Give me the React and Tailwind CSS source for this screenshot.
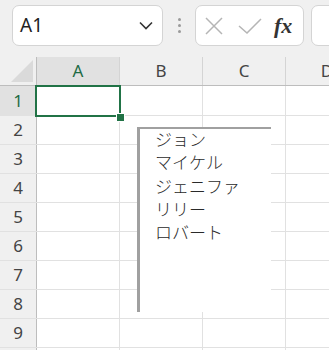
import React from 'react';

const cols = ['A', 'B', 'C', 'D'];
const rows = [1, 2, 3, 4, 5, 6, 7, 8, 9, 10];
const names = ['ジョン', 'マイケル', 'ジェニファ', 'リリー', 'ロバート'];

const ui = { fontFamily: '"Noto Sans", "Liberation Sans", sans-serif' };
const jp = { fontFamily: '"Noto Sans CJK JP", "Noto Sans", sans-serif' };

const App = () => {
  return (
    <div className="w-[329px] h-[350px] overflow-hidden bg-[#f0f0f0] relative" style={ui}>
      {/* formula bar */}
      <div className="h-[57px] flex items-start pt-[5px] pl-[12px]">
        <div className="w-[151px] h-[41px] bg-white border border-[#d4d4d4] rounded-[7px] flex items-center justify-between pl-[7px] pr-[9px] shrink-0">
          <span className="text-[19px] text-[#1f1f1f] leading-none">A1</span>
          <svg width="14" height="9" viewBox="0 0 14 9" fill="none" stroke="#333" strokeWidth="1.6">
            <path d="M1 1.5 L7 7.5 L13 1.5" />
          </svg>
        </div>
        <div className="w-[32px] h-[41px] flex flex-col items-center justify-center gap-[3px] shrink-0">
          <span className="w-[3px] h-[3px] bg-[#9a9a9a] rounded-full" />
          <span className="w-[3px] h-[3px] bg-[#9a9a9a] rounded-full" />
          <span className="w-[3px] h-[3px] bg-[#9a9a9a] rounded-full" />
        </div>
        <div className="w-[109px] h-[41px] bg-white border border-[#d4d4d4] rounded-[7px] flex items-center pl-[8px] gap-[14px] shrink-0">
          <svg width="20" height="18" viewBox="0 0 20 18" fill="none" stroke="#b5b5b5" strokeWidth="1.5">
            <path d="M2 1 L18 17 M18 1 L2 17" />
          </svg>
          <svg width="24" height="16" viewBox="0 0 24 16" fill="none" stroke="#b5b5b5" strokeWidth="1.5">
            <path d="M1 8 L9 15 L23 1" />
          </svg>
          <span className="text-[22px] leading-none text-[#333] italic font-bold -ml-[2px]" style={{ fontFamily: '"Liberation Serif", serif' }}>fx</span>
        </div>
        <div className="ml-[7px] w-[40px] h-[41px] bg-white border border-[#d4d4d4] rounded-[7px] shrink-0" />
      </div>

      {/* grid */}
      <div className="bg-white">
        <div className="flex h-[29px] bg-[#f0f0f0] border-b border-[#bdbdbd]">
          <div className="w-[37px] shrink-0 border-r border-[#bdbdbd] relative overflow-hidden">
            <svg className="absolute right-[3px] bottom-[3px]" width="22" height="22" viewBox="0 0 22 22">
              <path d="M22 0 L22 22 L0 22 Z" fill="#dadada" />
            </svg>
          </div>
          {cols.map((c, i) => (
            <div
              key={c}
              className={`w-[83px] shrink-0 border-r border-[#d4d4d4] flex items-center justify-center text-[17px] ${i === 0 ? 'bg-[#e1e1e1] text-[#1e6b45]' : 'text-[#444]'}`}
            >
              {c}
            </div>
          ))}
        </div>
        {rows.map((r, ri) => (
          <div key={r} className={`flex ${ri === 0 ? 'h-[30px]' : 'h-[29px]'} border-b border-[#e1e1e1]`}>
            <div
              className={`w-[37px] shrink-0 border-r border-[#bdbdbd] flex items-center justify-center text-[17px] ${ri === 0 ? 'bg-[#e1e1e1] text-[#1e6b45]' : 'bg-[#f0f0f0] text-[#444]'}`}
            >
              {r < 10 ? r : ''}
            </div>
            {cols.map((c) => (
              <div key={c} className="w-[83px] shrink-0 border-r border-[#e1e1e1]" />
            ))}
          </div>
        ))}
      </div>

      {/* selection A1 */}
      <div className="absolute left-[35px] top-[85px] w-[86px] h-[32px] border-2 border-[#217346]" />
      <div className="absolute left-[116px] top-[113px] w-[7px] h-[7px] bg-[#217346] border border-white box-content" />

      {/* list box */}
      <div className="absolute left-[137px] top-[127px] w-[134px] h-[185px] bg-white border-l-[3px] border-t-[2px] border-[#a0a0a0] pl-[15px]" style={jp}>
        <div className="-mt-[2px]">
          {names.map((n) => (
            <div key={n} className="text-[17px] leading-[23.3px] text-[#2a2a2a] font-light">
              {n}
            </div>
          ))}
        </div>
      </div>
    </div>
  );
};

export default App;
